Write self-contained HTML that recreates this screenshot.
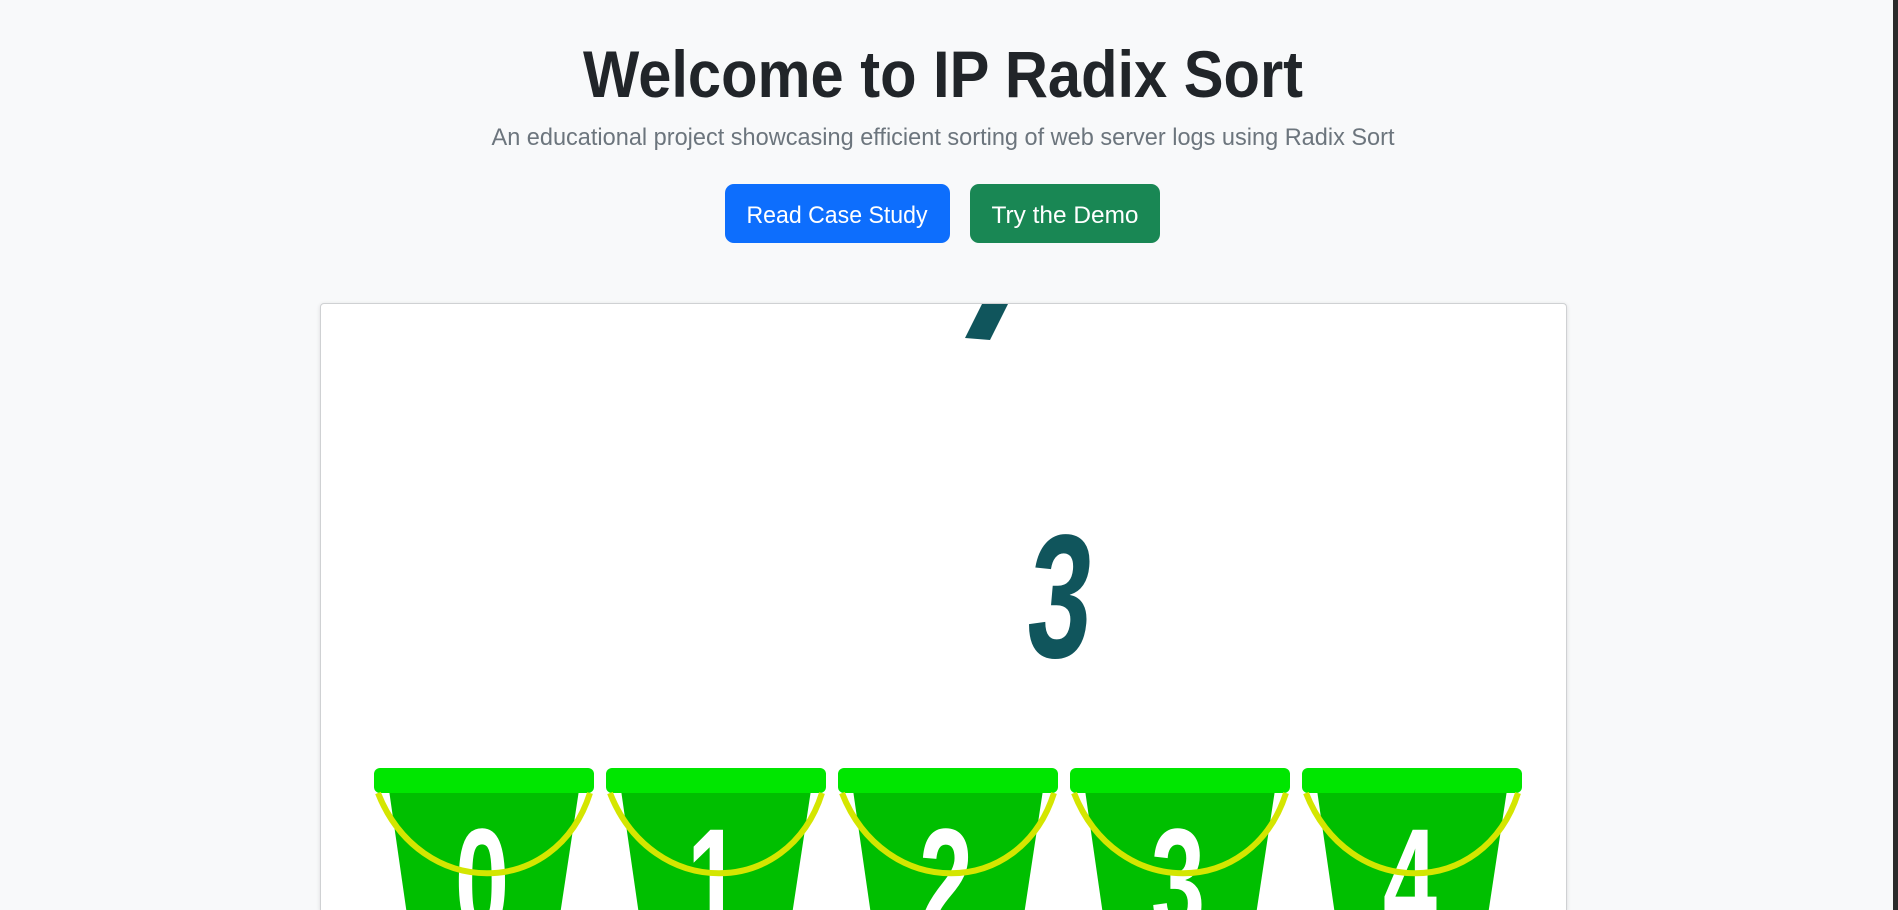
<!DOCTYPE html>
<html><head><meta charset="utf-8"><style>
html,body{margin:0;padding:0;width:1898px;height:910px;overflow:hidden;background:#f8f9fa;font-family:"Liberation Sans",sans-serif}
.sb{position:absolute;left:1893px;top:0;width:5px;height:910px;background:#2b2b2b}
.card{position:absolute;left:320px;top:303px;width:1245px;height:607px;background:#fff;border:1px solid #cfd1d3;border-bottom:none;border-radius:4px 4px 0 0;box-shadow:0 1px 4px rgba(0,0,0,.12)}
.btn{position:absolute;top:184px;height:59px;border-radius:9px;color:#fff}
.wrap{position:absolute;left:0;top:0;width:1898px;height:910px;overflow:hidden}
</style></head><body><div class="wrap">
<svg width="1898" height="910" style="position:absolute;left:0;top:0">
<text x="943" y="97" text-anchor="middle" font-family="Liberation Sans" font-weight="bold" font-size="66" fill="#212529" textLength="720" lengthAdjust="spacingAndGlyphs">Welcome to IP Radix Sort</text>
<text x="943" y="145" text-anchor="middle" font-family="Liberation Sans" font-size="24" fill="#6c757d" textLength="903" lengthAdjust="spacingAndGlyphs">An educational project showcasing efficient sorting of web server logs using Radix Sort</text>
</svg>
<div class="btn" style="left:725px;width:225px;background:#0d6efd"></div>
<div class="btn" style="left:970px;width:190px;background:#198754"></div>
<svg width="1898" height="910" style="position:absolute;left:0;top:0">
<text x="837" y="223" text-anchor="middle" font-size="24" fill="#fff" textLength="181" lengthAdjust="spacingAndGlyphs">Read Case Study</text>
<text x="1065" y="223" text-anchor="middle" font-size="24" fill="#fff" textLength="147" lengthAdjust="spacingAndGlyphs">Try the Demo</text>
</svg>
<div class="card"></div>
<div class="sb"></div>
<svg width="1898" height="910" style="position:absolute;left:0;top:0">
<defs><clipPath id="c"><rect x="321" y="304" width="1245" height="606"/></clipPath></defs>
<g clip-path="url(#c)" font-family="Liberation Sans" font-weight="bold" font-size="150" fill="#fff">
<polygon points="984,300 1010,300 990,340 965,338" fill="#10555c"/>
<text x="1024" y="657" font-size="176" fill="#10555c" textLength="64" lengthAdjust="spacingAndGlyphs" transform="skewX(-5) translate(57,0)">3</text>
<g>
<polygon points="389,790 579,790 560,915 407,915" fill="#00bf00"/><rect x="374" y="768" width="220" height="25" rx="6" fill="#00e600"/>
<text x="455" y="933" textLength="54" lengthAdjust="spacingAndGlyphs">0</text>
<path d="M378,793 C420,900 556,900 590,793" fill="none" stroke="#d4e600" stroke-width="6"/>
</g>
<g transform="translate(232,0)">
<polygon points="389,790 579,790 560,915 407,915" fill="#00bf00"/><rect x="374" y="768" width="220" height="25" rx="6" fill="#00e600"/>
<text x="455" y="933" textLength="54" lengthAdjust="spacingAndGlyphs">1</text>
<path d="M378,793 C420,900 556,900 590,793" fill="none" stroke="#d4e600" stroke-width="6"/>
</g>
<g transform="translate(464,0)">
<polygon points="389,790 579,790 560,915 407,915" fill="#00bf00"/><rect x="374" y="768" width="220" height="25" rx="6" fill="#00e600"/>
<text x="455" y="933" textLength="54" lengthAdjust="spacingAndGlyphs">2</text>
<path d="M378,793 C420,900 556,900 590,793" fill="none" stroke="#d4e600" stroke-width="6"/>
</g>
<g transform="translate(696,0)">
<polygon points="389,790 579,790 560,915 407,915" fill="#00bf00"/><rect x="374" y="768" width="220" height="25" rx="6" fill="#00e600"/>
<text x="455" y="933" textLength="54" lengthAdjust="spacingAndGlyphs">3</text>
<path d="M378,793 C420,900 556,900 590,793" fill="none" stroke="#d4e600" stroke-width="6"/>
</g>
<g transform="translate(928,0)">
<polygon points="389,790 579,790 560,915 407,915" fill="#00bf00"/><rect x="374" y="768" width="220" height="25" rx="6" fill="#00e600"/>
<text x="455" y="933" textLength="54" lengthAdjust="spacingAndGlyphs">4</text>
<path d="M378,793 C420,900 556,900 590,793" fill="none" stroke="#d4e600" stroke-width="6"/>
</g>
</g>
</svg>
</div></body></html>
